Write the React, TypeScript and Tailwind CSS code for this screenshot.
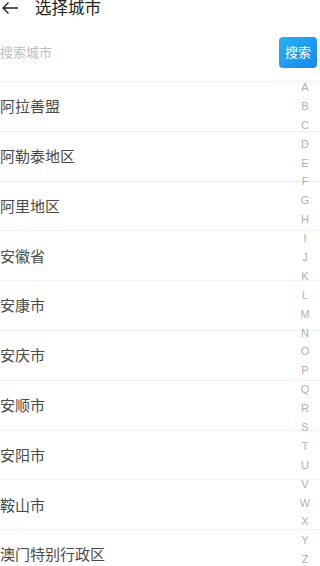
const cities = [
  "阿拉善盟",
  "阿勒泰地区",
  "阿里地区",
  "安徽省",
  "安康市",
  "安庆市",
  "安顺市",
  "安阳市",
  "鞍山市",
  "澳门特别行政区",
];

const letters = "ABCDEFGHIJKLMNOPQRSTUVWXYZ".split("");

const font = { fontFamily: '"Noto Sans", "Noto Sans CJK SC", sans-serif' };

const App = () => {
  return (
    <div className="relative w-[320px] h-[566px] overflow-hidden bg-white" style={font}>
      {/* header, scrolled up a bit */}
      <div className="-mt-[16px] h-12 flex items-center">
        <svg width="18" height="14" viewBox="0 0 18 14" className="ml-[1px] text-[#222]">
          <path d="M17 7H2M7.5 1.5L2 7l5.5 5.5" fill="none" stroke="currentColor" strokeWidth="1.4" />
        </svg>
        <span className="ml-[16px] text-[16.5px] leading-none text-[#222]">选择城市</span>
      </div>

      {/* search */}
      <div className="h-[49px] pt-[5px] flex items-start">
        <div className="flex-1 h-[31px] flex items-center text-[13px] text-[#bdbdbd]">搜索城市</div>
        <button className="mr-[3px] w-[38px] h-[31px] rounded-[4px] bg-gradient-to-br from-[#2bb0f7] to-[#1787ee] text-white text-[13px] flex items-center justify-center">
          搜索
        </button>
      </div>

      {/* city list */}
      <div>
        {cities.map((c) => (
          <div key={c} className="h-[49.8px] border-t border-[#f0f0f0] flex items-center text-[15px] text-[#4a4a4a]">
            {c}
          </div>
        ))}
      </div>

      {/* alphabet index */}
      <div className="absolute right-0 top-[78px] w-[30px] flex flex-col items-center">
        {letters.map((l) => (
          <div key={l} className="h-[18.9px] flex items-center text-[11px] leading-none text-[#b0b0b0]" style={{ fontFamily: '"Liberation Sans", sans-serif' }}>
            {l}
          </div>
        ))}
      </div>
    </div>
  );
};

export default App;
